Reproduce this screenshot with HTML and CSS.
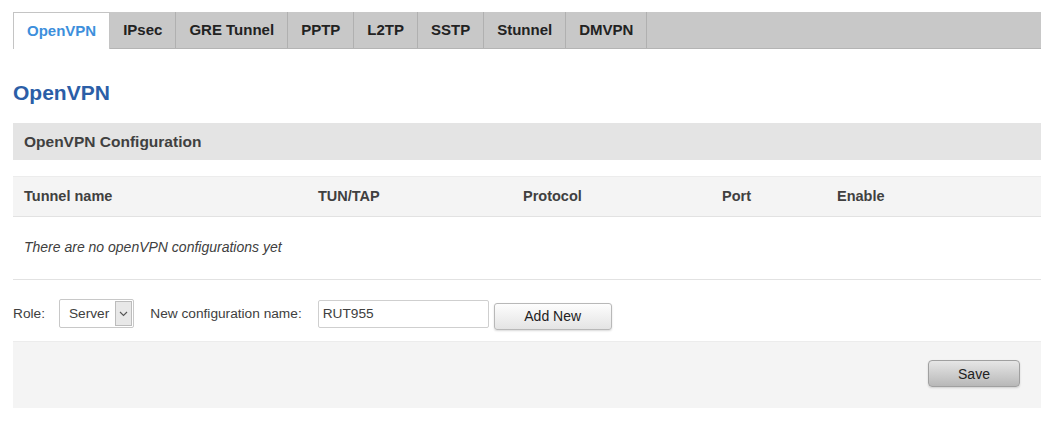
FILE: index.html
```html
<!DOCTYPE html>
<html lang="en">
<head>
    <meta charset="UTF-8">
    <title>OpenVPN</title>
    <link rel="stylesheet" href="styles.css">
</head>
<body>
    <div class="container">
        <ul class="tabs">
            <li class="tab active">OpenVPN</li>
            <li class="tab">IPsec</li>
            <li class="tab">GRE Tunnel</li>
            <li class="tab">PPTP</li>
            <li class="tab">L2TP</li>
            <li class="tab">SSTP</li>
            <li class="tab">Stunnel</li>
            <li class="tab">DMVPN</li>
        </ul>
        <h2 class="page-title">OpenVPN</h2>
        <div class="section-title">OpenVPN Configuration</div>
        <div class="table">
            <div class="table-head">
                <div class="col c1">Tunnel name</div>
                <div class="col c2">TUN/TAP</div>
                <div class="col c3">Protocol</div>
                <div class="col c4">Port</div>
                <div class="col c5">Enable</div>
            </div>
            <div class="empty-row">There are no openVPN configurations yet</div>
        </div>
        <div class="add-row">
            <span class="label">Role:</span>
            <div class="select">
                <span class="select-value">Server</span>
                <span class="select-arrow">
                    <svg width="9" height="6" viewBox="0 0 9 6"><path d="M1 1 L4.5 4.5 L8 1" fill="none" stroke="#555" stroke-width="1.1"/></svg>
                </span>
            </div>
            <span class="label name-label">New configuration name:</span>
            <input class="text-input" type="text" value="RUT955">
            <button class="btn add-btn">Add New</button>
        </div>
        <div class="footer">
            <button class="btn save-btn">Save</button>
        </div>
    </div>
</body>
</html>
```

FILE: styles.css
```css
body {
    margin: 0;
    font-family: 'Liberation Sans', Arial, sans-serif;
    background: white;
    color: #404040;
}
.container {
    margin: 12px 13px 0 13px;
}
.tabs {
    list-style: none;
    margin: 0;
    padding: 0;
    display: flex;
    height: 37px;
    background: #c8c8c8;
    border-bottom: 1px solid #b4b4b4;
    box-sizing: border-box;
}
.tab {
    font-size: 15px;
    font-weight: bold;
    color: #222;
    padding: 0 13px;
    line-height: 36px;
    border-right: 1px solid #b0b0b0;
}
.tab.active {
    background: white;
    color: #3d8fdc;
    border-left: 1px solid #c4c4c4;
    border-right: 1px solid #c4c4c4;
    border-top: 1px solid #c4c4c4;
    line-height: 35px;
    height: 37px;
    box-sizing: border-box;
    padding: 0 13px;
}
.page-title {
    margin: 31px 0 0 0;
    font-size: 21px;
    font-weight: bold;
    color: #2b5ea7;
    height: 25px;
    line-height: 25px;
}
.section-title {
    margin-top: 18px;
    background: #e4e4e4;
    height: 37px;
    line-height: 37px;
    padding-left: 11px;
    font-size: 15.5px;
    font-weight: bold;
    color: #404040;
}
.table {
    margin-top: 16px;
}
.table-head {
    display: flex;
    background: #f4f4f4;
    border-top: 1px solid #ececec;
    border-bottom: 1px solid #e2e2e2;
    height: 39px;
    line-height: 38px;
    font-size: 14.5px;
    font-weight: bold;
    color: #404040;
}
.col.c1 { padding-left: 11px; width: 294px; }
.col.c2 { width: 205px; }
.col.c3 { width: 199px; }
.col.c4 { width: 115px; }
.col.c5 { width: 100px; }
.empty-row {
    height: 62px;
    line-height: 60px;
    padding-left: 11px;
    font-size: 14px;
    font-style: italic;
    color: #404040;
    border-bottom: 1px solid #e2e2e2;
}
.add-row {
    display: flex;
    align-items: center;
    height: 61px;
    box-sizing: border-box;
    padding-top: 6px;
    font-size: 13.7px;
    color: #404040;
}
.label {
    margin-right: 14px;
}
.select {
    display: flex;
    align-items: center;
    height: 29px;
    border: 1px solid #c8c8c8;
    border-radius: 2px;
    box-sizing: border-box;
    padding-left: 9px;
    margin-right: 16px;
    background: white;
}
.select-value {
    margin-right: 6px;
}
.select-arrow {
    display: flex;
    align-items: center;
    justify-content: center;
    width: 17px;
    height: 25px;
    margin-right: 1px;
    background: #e8e8e8;
    border: 1px solid #bcbcbc;
    box-sizing: border-box;
}
.name-label {
    margin-right: 16px;
}
.text-input {
    width: 171px;
    height: 28px;
    box-sizing: border-box;
    border: 1px solid #cfcfcf;
    border-radius: 2px;
    padding: 0 4px;
    font-family: 'Liberation Sans', Arial, sans-serif;
    font-size: 13.7px;
    color: #404040;
    margin-right: 5px;
}
.btn {
    font-family: 'Liberation Sans', Arial, sans-serif;
    font-size: 14px;
    color: #222;
    border: 1px solid #b8b8b8;
    border-radius: 3px;
    background: linear-gradient(#fdfdfd, #e4e4e4);
    box-shadow: 0 1px 2px rgba(0,0,0,0.15);
}
.add-btn {
    width: 118px;
    height: 27px;
    margin-top: 5px;
}
.footer {
    background: #f4f4f4;
    border-top: 1px solid #ececec;
    height: 67px;
    display: flex;
    justify-content: flex-end;
    align-items: flex-start;
    box-sizing: border-box;
    padding-top: 18px;
    padding-right: 21px;
}
.save-btn {
    width: 92px;
    height: 27px;
    background: linear-gradient(#e6e6e6, #b8b8b8);
    border: 1px solid #a0a0a0;
    border-radius: 4px;
}
```
